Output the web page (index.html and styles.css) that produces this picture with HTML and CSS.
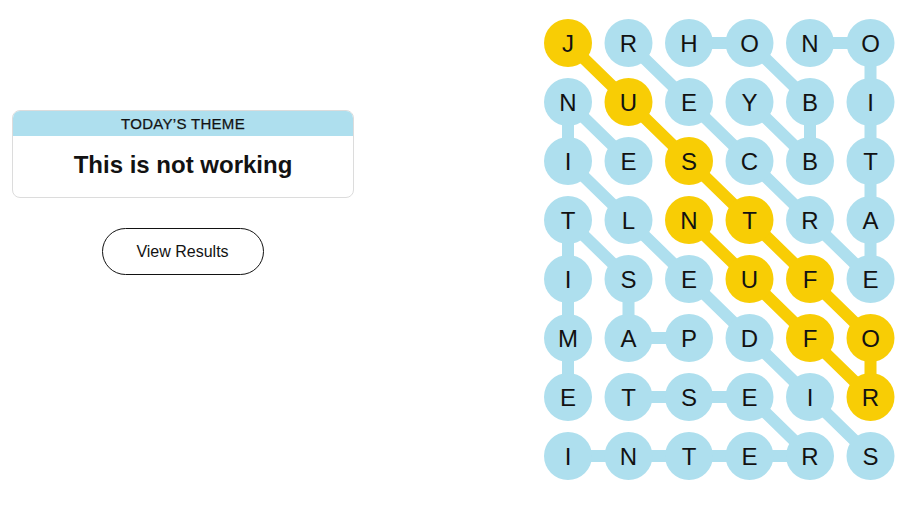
FILE: index.html
```html
<!DOCTYPE html>
<html lang="en">
<head>
<meta charset="utf-8">
<title>Strands</title>
<link rel="stylesheet" href="styles.css">
</head>
<body>
<main class="page">
  <section class="side">
    <div class="theme-card">
      <div class="theme-head">TODAY’S THEME</div>
      <div class="theme-body">This is not working</div>
    </div>
    <button class="results-btn" type="button">View Results</button>
  </section>
  <svg class="board" width="373" height="508" viewBox="530 0 373 508" xmlns="http://www.w3.org/2000/svg">
    <g class="links-blue" fill="none" stroke-linecap="round" stroke-linejoin="round">
      <polyline points="628.5,43 689,102 749.5,161 810,220 870.5,279 870.5,220 870.5,161 870.5,102 870.5,43 810,43"/>
      <polyline points="689,43 749.5,43 810,102 810,161 749.5,102"/>
      <polyline points="689,338 628.5,338 628.5,279 568,220 568,279 568,338 568,397"/>
      <polyline points="568,456 628.5,456 689,456 749.5,456 810,456 749.5,397 689,397 628.5,397"/>
      <polyline points="870.5,456 810,397 749.5,338 689,279 628.5,220 568,161 568,102 628.5,161"/>
    </g>
    <g class="links-gold" fill="none" stroke-linecap="round" stroke-linejoin="round">
      <polyline points="568,43 628.5,102 689,161 749.5,220 810,279 870.5,338 870.5,397 810,338 749.5,279 689,220"/>
    </g>
    <g class="nodes">
      <g class="row">
        <circle class="gold" cx="568" cy="43" r="24"/><text x="568" y="51.5">J</text>
        <circle cx="628.5" cy="43" r="24"/><text x="628.5" y="51.5">R</text>
        <circle cx="689" cy="43" r="24"/><text x="689" y="51.5">H</text>
        <circle cx="749.5" cy="43" r="24"/><text x="749.5" y="51.5">O</text>
        <circle cx="810" cy="43" r="24"/><text x="810" y="51.5">N</text>
        <circle cx="870.5" cy="43" r="24"/><text x="870.5" y="51.5">O</text>
      </g>
      <g class="row">
        <circle cx="568" cy="102" r="24"/><text x="568" y="110.5">N</text>
        <circle class="gold" cx="628.5" cy="102" r="24"/><text x="628.5" y="110.5">U</text>
        <circle cx="689" cy="102" r="24"/><text x="689" y="110.5">E</text>
        <circle cx="749.5" cy="102" r="24"/><text x="749.5" y="110.5">Y</text>
        <circle cx="810" cy="102" r="24"/><text x="810" y="110.5">B</text>
        <circle cx="870.5" cy="102" r="24"/><text x="870.5" y="110.5">I</text>
      </g>
      <g class="row">
        <circle cx="568" cy="161" r="24"/><text x="568" y="169.5">I</text>
        <circle cx="628.5" cy="161" r="24"/><text x="628.5" y="169.5">E</text>
        <circle class="gold" cx="689" cy="161" r="24"/><text x="689" y="169.5">S</text>
        <circle cx="749.5" cy="161" r="24"/><text x="749.5" y="169.5">C</text>
        <circle cx="810" cy="161" r="24"/><text x="810" y="169.5">B</text>
        <circle cx="870.5" cy="161" r="24"/><text x="870.5" y="169.5">T</text>
      </g>
      <g class="row">
        <circle cx="568" cy="220" r="24"/><text x="568" y="228.5">T</text>
        <circle cx="628.5" cy="220" r="24"/><text x="628.5" y="228.5">L</text>
        <circle class="gold" cx="689" cy="220" r="24"/><text x="689" y="228.5">N</text>
        <circle class="gold" cx="749.5" cy="220" r="24"/><text x="749.5" y="228.5">T</text>
        <circle cx="810" cy="220" r="24"/><text x="810" y="228.5">R</text>
        <circle cx="870.5" cy="220" r="24"/><text x="870.5" y="228.5">A</text>
      </g>
      <g class="row">
        <circle cx="568" cy="279" r="24"/><text x="568" y="287.5">I</text>
        <circle cx="628.5" cy="279" r="24"/><text x="628.5" y="287.5">S</text>
        <circle cx="689" cy="279" r="24"/><text x="689" y="287.5">E</text>
        <circle class="gold" cx="749.5" cy="279" r="24"/><text x="749.5" y="287.5">U</text>
        <circle class="gold" cx="810" cy="279" r="24"/><text x="810" y="287.5">F</text>
        <circle cx="870.5" cy="279" r="24"/><text x="870.5" y="287.5">E</text>
      </g>
      <g class="row">
        <circle cx="568" cy="338" r="24"/><text x="568" y="346.5">M</text>
        <circle cx="628.5" cy="338" r="24"/><text x="628.5" y="346.5">A</text>
        <circle cx="689" cy="338" r="24"/><text x="689" y="346.5">P</text>
        <circle cx="749.5" cy="338" r="24"/><text x="749.5" y="346.5">D</text>
        <circle class="gold" cx="810" cy="338" r="24"/><text x="810" y="346.5">F</text>
        <circle class="gold" cx="870.5" cy="338" r="24"/><text x="870.5" y="346.5">O</text>
      </g>
      <g class="row">
        <circle cx="568" cy="397" r="24"/><text x="568" y="405.5">E</text>
        <circle cx="628.5" cy="397" r="24"/><text x="628.5" y="405.5">T</text>
        <circle cx="689" cy="397" r="24"/><text x="689" y="405.5">S</text>
        <circle cx="749.5" cy="397" r="24"/><text x="749.5" y="405.5">E</text>
        <circle cx="810" cy="397" r="24"/><text x="810" y="405.5">I</text>
        <circle class="gold" cx="870.5" cy="397" r="24"/><text x="870.5" y="405.5">R</text>
      </g>
      <g class="row">
        <circle cx="568" cy="456" r="24"/><text x="568" y="464.5">I</text>
        <circle cx="628.5" cy="456" r="24"/><text x="628.5" y="464.5">N</text>
        <circle cx="689" cy="456" r="24"/><text x="689" y="464.5">T</text>
        <circle cx="749.5" cy="456" r="24"/><text x="749.5" y="464.5">E</text>
        <circle cx="810" cy="456" r="24"/><text x="810" y="464.5">R</text>
        <circle cx="870.5" cy="456" r="24"/><text x="870.5" y="464.5">S</text>
      </g>
    </g>
  </svg>
</main>
</body>
</html>
```

FILE: styles.css
```css
html, body {
  margin: 0;
  padding: 0;
  background: #ffffff;
}

body {
  font-family: "Liberation Sans", Arial, sans-serif;
  color: #121212;
}

.page {
  display: flex;
  justify-content: space-between;
  align-items: flex-start;
  width: 903px;
  height: 508px;
  overflow: hidden;
}

.side {
  width: 366px;
  box-sizing: border-box;
  padding: 110px 12px 0 12px;
  display: flex;
  flex-direction: column;
  align-items: center;
  gap: 30px;
}

.theme-card {
  width: 100%;
  box-sizing: border-box;
  border: 1px solid #dcdcdc;
  border-radius: 8px;
  overflow: hidden;
  text-align: center;
}

.theme-head {
  background: #aedfee;
  font-size: 15px;
  line-height: 25px;
  letter-spacing: 0.3px;
  color: #121212;
  -webkit-text-stroke: 0.25px #121212;
}

.theme-body {
  padding: 15px 0 18px;
  font-size: 24px;
  line-height: 28px;
  font-weight: 700;
  color: #121212;
}

.results-btn {
  width: 162px;
  height: 47px;
  border: 1px solid #121212;
  border-radius: 24px;
  background: #ffffff;
  font-family: "Liberation Sans", Arial, sans-serif;
  font-size: 16px;
  color: #121212;
  padding: 0;
  margin-left: -1px;
}

.board {
  display: block;
  flex: none;
}

.links-blue polyline {
  stroke: #aedfee;
  stroke-width: 12;
}

.links-gold polyline {
  stroke: #f8cd05;
  stroke-width: 12;
}

.nodes circle {
  fill: #aedfee;
}

.nodes circle.gold {
  fill: #f8cd05;
}

.nodes text {
  font-family: "Liberation Sans", Arial, sans-serif;
  font-size: 24px;
  fill: #121212;
  text-anchor: middle;
}
```
